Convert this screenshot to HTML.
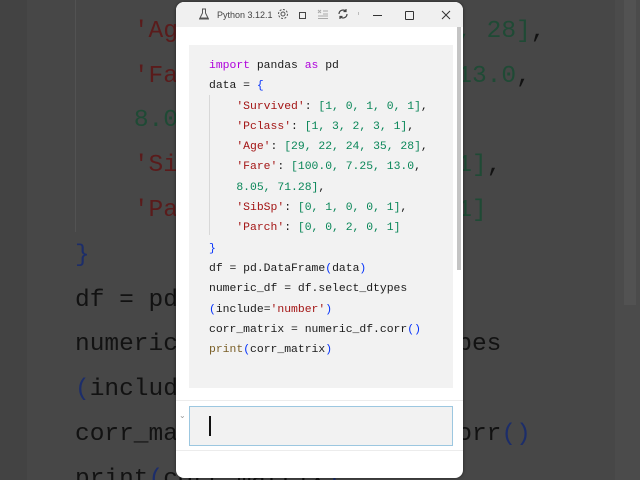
<!DOCTYPE html>
<html><head><meta charset="utf-8"><style>
*{margin:0;padding:0;box-sizing:border-box}
html,body{width:640px;height:480px;overflow:hidden}
body{background:#474747;font-family:"Liberation Mono",monospace}
#root{position:relative;width:640px;height:480px;overflow:hidden;background:#474747}
.bg{position:absolute;left:75px;top:-35px;font-size:24.5px;line-height:44.8px;color:#121212;white-space:pre}
.bs{color:#5a1b1b}.bn{color:#1f4a35}.bb{color:#1c2d6a}
.win{position:absolute;left:176px;top:2px;width:287px;height:476px;background:#fff;border-radius:8px;overflow:hidden;box-shadow:0 0 3px rgba(0,0,0,.5)}
.tb{height:25px;background:#f0f0f0;position:relative;font-family:"Liberation Sans",sans-serif;font-size:9px;color:#444}
.cell{position:absolute;left:13px;top:43px;width:264px;height:343px;background:#f2f2f2}
.code{position:absolute;left:33px;top:54px;font-size:11.4px;line-height:20.3px;color:#1a1a1a;white-space:pre}
.s{color:#a31515}.n{color:#098658}.k{color:#af00db}.b{color:#0431fa}.f{color:#795e26}
</style></head><body><div id="root">
<div style="position:absolute;left:0;top:0;width:27px;height:480px;background:#434343"></div>
<div style="position:absolute;left:615px;top:0;width:25px;height:480px;background:#4b4b4b"></div>
<div style="position:absolute;left:624px;top:0;width:12px;height:305px;background:#525252"></div>
<div style="position:absolute;left:75px;top:0;width:1px;height:232px;background:#525252"></div>
<div class="bg">    <span class="bs">'Pclass'</span>: <span class="bn">[1, 3, 2, 3, 1]</span>,
    <span class="bs">'Age'</span>: <span class="bn">[29, 22, 24, 35, 28]</span>,
    <span class="bs">'Fare'</span>: <span class="bn">[100.0, 7.25, 13.0</span>,
    <span class="bn">8.05, 71.28]</span>,
    <span class="bs">'SibSp'</span>: <span class="bn">[0, 1, 0, 0, 1]</span>,
    <span class="bs">'Parch'</span>: <span class="bn">[0, 0, 2, 0, 1]</span>
<span class="bb">}</span>
df = pd.DataFrame<span class="bb">(</span>data<span class="bb">)</span>
numeric_df = df.select_dtypes
<span class="bb">(</span>include=<span class="bs">'number'</span><span class="bb">)</span>
corr_matrix = numeric_df.corr<span class="bb">()</span>
print<span class="bb">(</span>corr_matrix<span class="bb">)</span></div>
<div class="win">
 <div class="tb">
  <svg style="position:absolute;left:22px;top:6px" width="12" height="12" viewBox="0 0 12 12" fill="none" stroke="#555" stroke-width="1"><path d="M4 1h4M4.5 1v4L2 10h8L7.5 5V1M1 11h10"/></svg>
  <span style="position:absolute;left:41px;top:8px">Python 3.12.1</span>
  <svg style="position:absolute;left:101px;top:6px" width="12" height="12" viewBox="0 0 12 12" fill="none" stroke="#555"><circle cx="6" cy="6" r="2"/><circle cx="6" cy="6" r="4.5" stroke-dasharray="2 1.5"/></svg>
  <div style="position:absolute;left:123px;top:10px;width:7px;height:7px;border:1px solid #444"></div>
  <svg style="position:absolute;left:141px;top:6px" width="12" height="12" viewBox="0 0 12 12" fill="none" stroke="#aaa"><path d="M1 2l3 3M4 2L1 5M6 3h5M6 6h5M1 8h10M1 10.5h10"/></svg>
  <svg style="position:absolute;left:161px;top:6px" width="12" height="12" viewBox="0 0 12 12" fill="none" stroke="#444" stroke-width="1.2"><path d="M10 6a4 4 0 0 1-7 2.6M2 6a4 4 0 0 1 7-2.6M9 1v2.5H6.5M3 11V8.5h2.5"/></svg>
  <div style="position:absolute;left:182px;top:10px;width:1px;height:3px;background:#bbb"></div>
  <div style="position:absolute;left:197px;top:13px;width:9px;height:1px;background:#333"></div>
  <div style="position:absolute;left:229px;top:9px;width:9px;height:9px;border:1px solid #333;border-radius:1px"></div>
  <svg style="position:absolute;left:265px;top:8px" width="10" height="10" viewBox="0 0 10 10" stroke="#333"><path d="M1 1l8 8M9 1L1 9"/></svg>
 </div>
 <div style="position:absolute;left:281px;top:25px;width:4px;height:243px;background:#c4c4c4"></div>
 <div class="cell"></div>
 <div style="position:absolute;left:33px;top:93px;width:1px;height:140px;background:#d8d8d8"></div>
 <div class="code"><span class="k">import</span> pandas <span class="k">as</span> pd
data = <span class="b">{</span>
    <span class="s">'Survived'</span>: <span class="n">[1, 0, 1, 0, 1]</span>,
    <span class="s">'Pclass'</span>: <span class="n">[1, 3, 2, 3, 1]</span>,
    <span class="s">'Age'</span>: <span class="n">[29, 22, 24, 35, 28]</span>,
    <span class="s">'Fare'</span>: <span class="n">[100.0, 7.25, 13.0</span>,
    <span class="n">8.05, 71.28]</span>,
    <span class="s">'SibSp'</span>: <span class="n">[0, 1, 0, 0, 1]</span>,
    <span class="s">'Parch'</span>: <span class="n">[0, 0, 2, 0, 1]</span>
<span class="b">}</span>
df = pd.DataFrame<span class="b">(</span>data<span class="b">)</span>
numeric_df = df.select_dtypes
<span class="b">(</span>include=<span class="s">'number'</span><span class="b">)</span>
corr_matrix = numeric_df.corr<span class="b">()</span>
<span class="f">print</span><span class="b">(</span>corr_matrix<span class="b">)</span></div>
 <div style="position:absolute;left:0;top:398px;width:287px;height:1px;background:#ececec"></div>
 <div style="position:absolute;left:3px;top:409px;font-size:8px;color:#999;font-family:'Liberation Sans',sans-serif">⌄</div>
 <div style="position:absolute;left:13px;top:404px;width:264px;height:40px;background:#f2f2f2;border:1px solid #9cc7e0"></div>
 <div style="position:absolute;left:33px;top:414px;width:2px;height:20px;background:#111"></div>
 <div style="position:absolute;left:0;top:448px;width:287px;height:1px;background:#ececec"></div>
</div>
</div></body></html>
